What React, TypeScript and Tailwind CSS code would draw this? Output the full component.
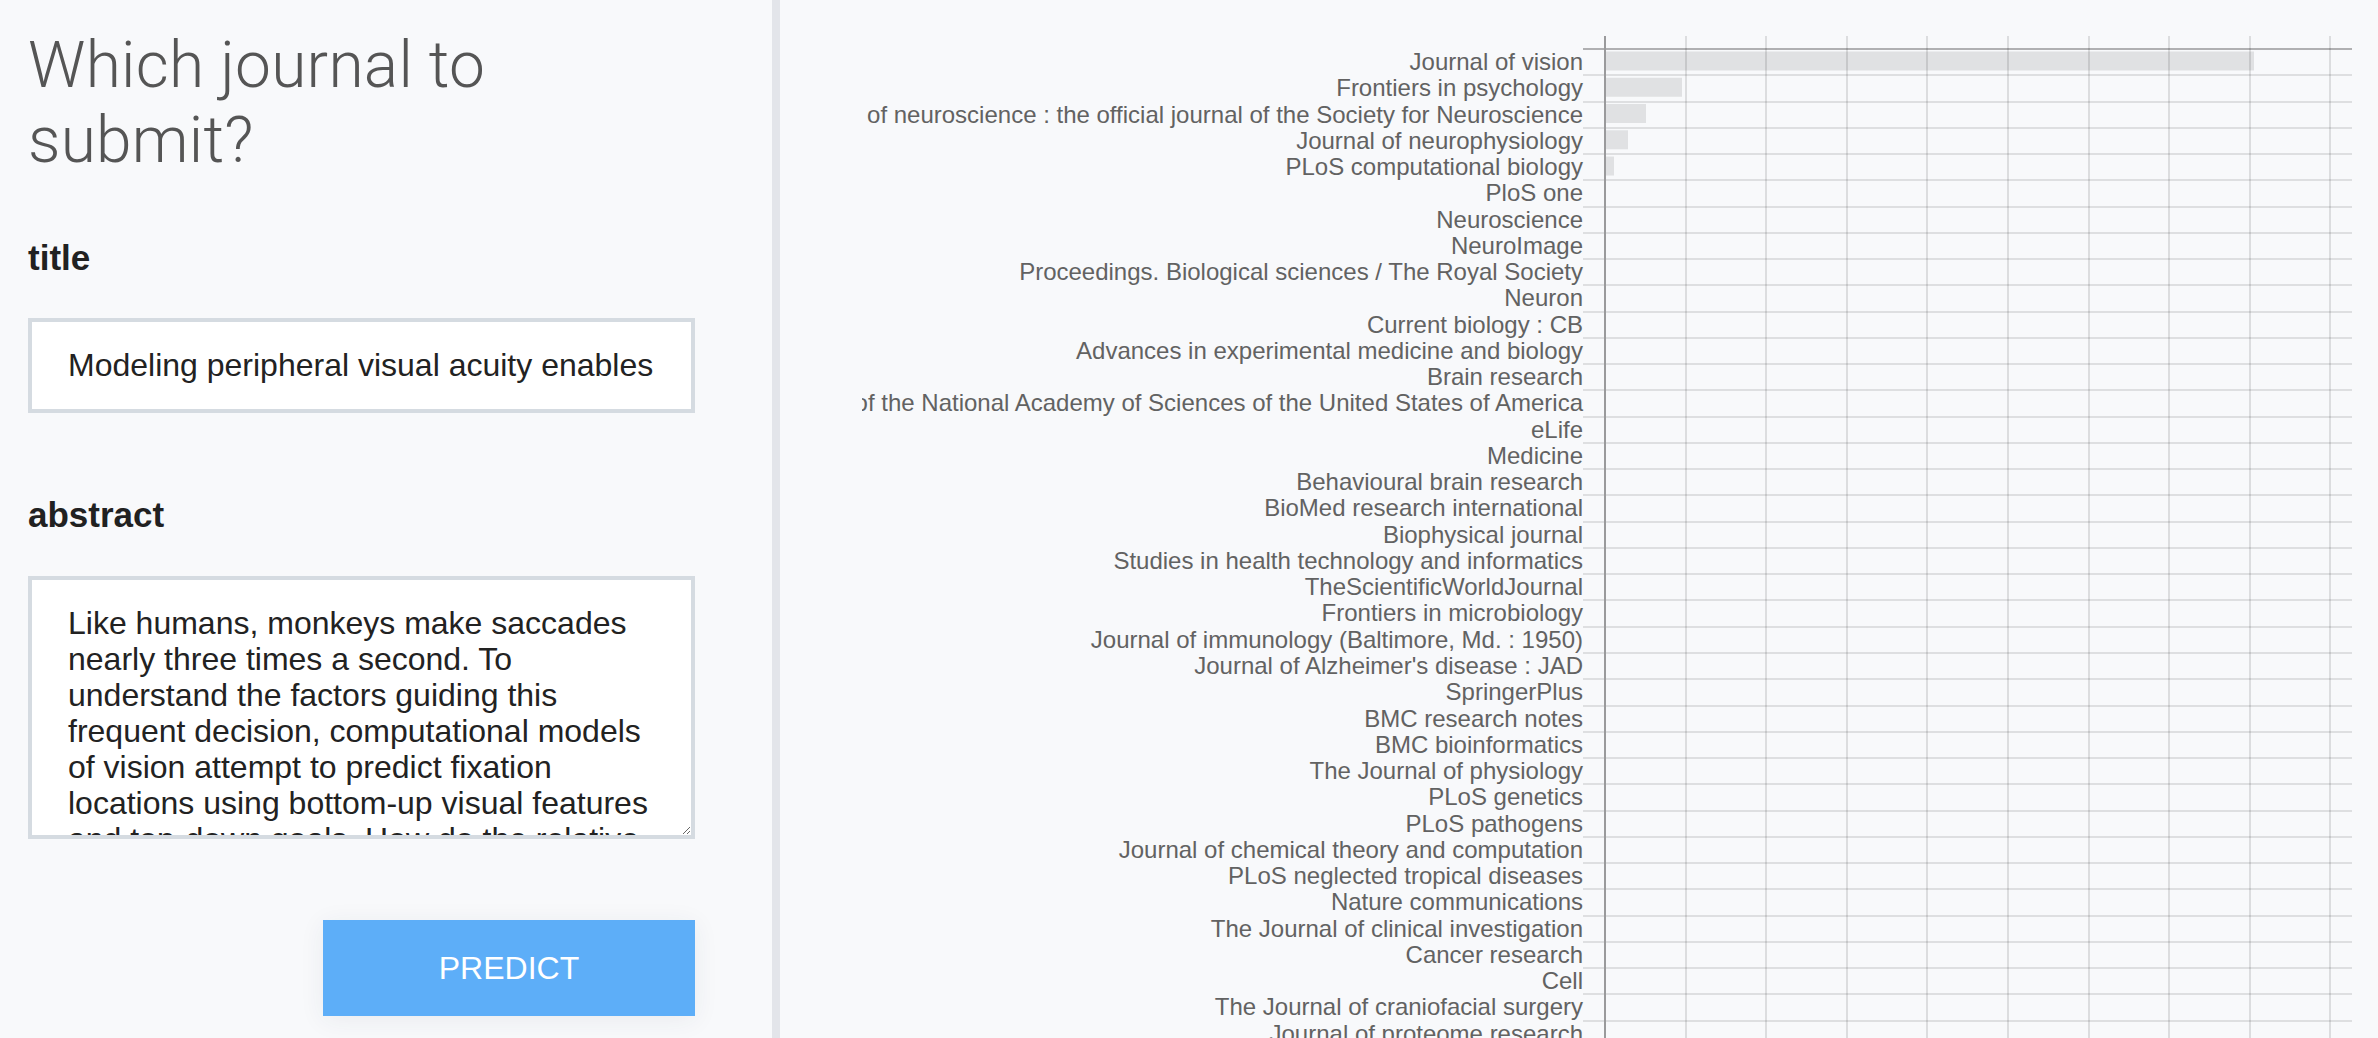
import { useState } from "react";

const journals = [
  "Journal of vision",
  "Frontiers in psychology",
  "The Journal of neuroscience : the official journal of the Society for Neuroscience",
  "Journal of neurophysiology",
  "PLoS computational biology",
  "PloS one",
  "Neuroscience",
  "NeuroImage",
  "Proceedings. Biological sciences / The Royal Society",
  "Neuron",
  "Current biology : CB",
  "Advances in experimental medicine and biology",
  "Brain research",
  "Proceedings of the National Academy of Sciences of the United States of America",
  "eLife",
  "Medicine",
  "Behavioural brain research",
  "BioMed research international",
  "Biophysical journal",
  "Studies in health technology and informatics",
  "TheScientificWorldJournal",
  "Frontiers in microbiology",
  "Journal of immunology (Baltimore, Md. : 1950)",
  "Journal of Alzheimer's disease : JAD",
  "SpringerPlus",
  "BMC research notes",
  "BMC bioinformatics",
  "The Journal of physiology",
  "PLoS genetics",
  "PLoS pathogens",
  "Journal of chemical theory and computation",
  "PLoS neglected tropical diseases",
  "Nature communications",
  "The Journal of clinical investigation",
  "Cancer research",
  "Cell",
  "The Journal of craniofacial surgery",
  "Journal of proteome research",
];

// bar lengths in px, only the first few journals get a visible score
const scores = [649, 77, 41, 23, 9];

const ROW_H = 26.26;
const TOP = 49;
const AXIS_X = 743;
const LABEL_X = 721;
const RIGHT_X = 1490;
const TICK_STEP = 80.6;

const ABSTRACT =
  "Like humans, monkeys make saccades nearly three times a second. To understand the factors guiding this frequent decision, computational models of vision attempt to predict fixation locations using bottom-up visual features and top-down goals. How do the relative influences of these factors evolve over multiple time scales? Here we analyzed visual features at fixations using a retinal transform that provides realistic visual acuity by suitably degrading visual information in the periphery.";

function JournalChart() {
  const rows = journals.length;
  return (
    <svg width={1516} height={1038} className="block" fontFamily="'Liberation Sans', Arial, sans-serif">
      {journals.map((name, i) => {
        const y = TOP + i * ROW_H;
        return (
          <g key={name}>
            {scores[i] ? (
              <rect x={AXIS_X} y={y + 2.5} width={scores[i]} height={19} fill="#e0e1e3" />
            ) : null}
            <text x={LABEL_X} y={y + 21} textAnchor="end" fontSize={24} fill="#626262">
              {name}
            </text>
          </g>
        );
      })}

      {Array.from({ length: rows + 1 }).map((_, i) => (
        <line
          key={"h" + i}
          x1={LABEL_X}
          x2={RIGHT_X}
          y1={Math.round(TOP + i * ROW_H)}
          y2={Math.round(TOP + i * ROW_H)}
          stroke={i === 0 ? "#b0b0b2" : "#dedfe1"}
          strokeWidth={2}
        />
      ))}

      {Array.from({ length: 9 }).map((_, k) => {
        const x = Math.round(AXIS_X + (k + 1) * TICK_STEP);
        return <line key={"v" + k} x1={x} x2={x} y1={36} y2={1038} stroke="#000" strokeOpacity={0.11} strokeWidth={2} />;
      })}
      <line x1={AXIS_X} x2={AXIS_X} y1={36} y2={1038} stroke="#9a9a9c" strokeWidth={2} />
    </svg>
  );
}

export default function App() {
  const [title, setTitle] = useState(
    "Modeling peripheral visual acuity enables discovery of gaze strategies at multiple time scales during natural scene search"
  );
  const [abstract, setAbstract] = useState(ABSTRACT);

  return (
    <div className="flex h-[1038px] w-full overflow-hidden bg-[#f8f9fb] font-['Liberation_Sans',Arial,sans-serif]">
      <aside className="flex w-[772px] shrink-0 flex-col pl-[28px] pr-[77px] pt-[28px]">
        <h1 className="font-['Roboto','Liberation_Sans',sans-serif] text-[64px] leading-[75px] font-light tracking-[0.25px] text-[#555555]">
          Which journal to
          <br />
          submit?
        </h1>

        <label className="mt-[60px] text-[35px] leading-[40px] font-bold text-[#212121]">title</label>
        <input
          className="mt-[40px] h-[95px] w-full border-[4px] border-[#d5dbe1] bg-white px-[36px] text-[32px] text-[#222222] outline-none"
          value={title}
          onChange={(e) => setTitle(e.target.value)}
        />

        <label className="mt-[82px] text-[35px] leading-[40px] font-bold text-[#212121]">abstract</label>
        <textarea
          className="mt-[41px] h-[263px] w-full overflow-hidden border-[4px] border-[#d5dbe1] bg-white px-[36px] pt-[25px] text-[32px] leading-[36px] text-[#222222] outline-none"
          value={abstract}
          onChange={(e) => setAbstract(e.target.value)}
        />

        <button className="mt-[81px] h-[96px] w-[372px] self-end bg-[#5daef8] text-[32px] text-white shadow-[0_4px_24px_rgba(40,60,90,0.07)]">
          PREDICT
        </button>
      </aside>

      <div className="w-[8px] shrink-0 bg-[#e3e5ea]" />

      <main className="min-w-0 flex-1 overflow-hidden pl-[82px]">
        <JournalChart />
      </main>
    </div>
  );
}
